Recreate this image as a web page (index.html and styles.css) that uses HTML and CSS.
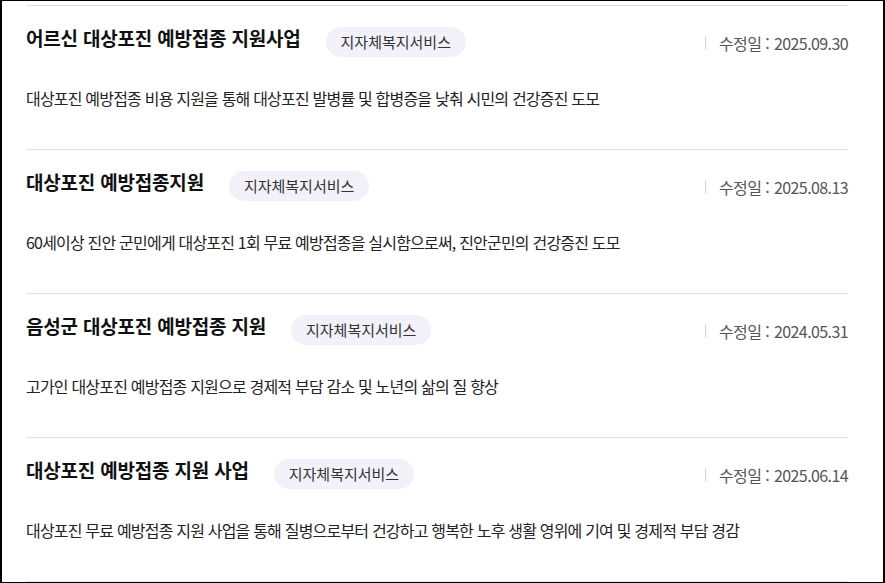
FILE: index.html
```html
<!DOCTYPE html>
<html lang="ko">
<head>
    <meta charset="UTF-8">
    <meta name="viewport" content="width=device-width, initial-scale=1.0">
    <title>대상포진 예방접종 지원</title>
    <link rel="stylesheet" href="styles.css">
</head>
<body>
    <div class="frame">
        <ul class="svc-list">
            <li class="svc-item">
                <div class="svc-head">
                    <h3 class="svc-title">어르신 대상포진 예방접종 지원사업</h3>
                    <span class="svc-tag">지자체복지서비스</span>
                    <span class="svc-date"><span class="svc-date-label">수정일 :</span>2025.09.30</span>
                </div>
                <p class="svc-desc">대상포진 예방접종 비용 지원을 통해 대상포진 발병률 및 합병증을 낮춰 시민의 건강증진 도모</p>
            </li>
            <li class="svc-item">
                <div class="svc-head">
                    <h3 class="svc-title">대상포진 예방접종지원</h3>
                    <span class="svc-tag">지자체복지서비스</span>
                    <span class="svc-date"><span class="svc-date-label">수정일 :</span>2025.08.13</span>
                </div>
                <p class="svc-desc">60세이상 진안 군민에게 대상포진 1회 무료 예방접종을 실시함으로써, 진안군민의 건강증진 도모</p>
            </li>
            <li class="svc-item">
                <div class="svc-head">
                    <h3 class="svc-title">음성군 대상포진 예방접종 지원</h3>
                    <span class="svc-tag">지자체복지서비스</span>
                    <span class="svc-date"><span class="svc-date-label">수정일 :</span>2024.05.31</span>
                </div>
                <p class="svc-desc">고가인 대상포진 예방접종 지원으로 경제적 부담 감소 및 노년의 삶의 질 향상</p>
            </li>
            <li class="svc-item">
                <div class="svc-head">
                    <h3 class="svc-title">대상포진 예방접종 지원 사업</h3>
                    <span class="svc-tag">지자체복지서비스</span>
                    <span class="svc-date"><span class="svc-date-label">수정일 :</span>2025.06.14</span>
                </div>
                <p class="svc-desc">대상포진 무료 예방접종 지원 사업을 통해 질병으로부터 건강하고 행복한 노후 생활 영위에 기여 및 경제적 부담 경감</p>
            </li>
        </ul>
    </div>
</body>
</html>
```

FILE: styles.css
```css
/* General Styles */
body {
    margin: 0;
    font-family: "Noto Sans CJK KR", "Noto Sans", sans-serif;
    color: #222;
    background-color: #fff;
}

/* Outer frame */
.frame {
    height: 583px;
    box-sizing: border-box;
    border-style: solid;
    border-color: #000;
    border-width: 1px 2px 1px 2px;
    padding: 4px 35px 0 24px;
    overflow: hidden;
}

/* List */
.svc-list {
    list-style: none;
    margin: 0;
    padding: 0;
    border-top: 1px solid #e1e1e1;
}

.svc-item {
    padding: 19px 0 40px 0;
    border-bottom: 1px solid #e1e1e1;
}

/* Item head */
.svc-head {
    display: flex;
    align-items: flex-start;
}

.svc-title {
    margin: 0;
    font-size: 19px;
    font-weight: bold;
    line-height: 26px;
    letter-spacing: -0.2px;
    color: #111;
}

.svc-tag {
    margin: 2px 0 0 25px;
    padding: 0 15px;
    height: 30px;
    line-height: 30px;
    border-radius: 15px;
    background-color: #f2f1f9;
    font-size: 15px;
    color: #333;
}

.svc-date {
    margin: 8px 0 0 auto;
    display: flex;
    align-items: center;
    font-size: 16px;
    line-height: 20px;
    letter-spacing: -0.6px;
    color: #555;
}

.svc-date::before {
    content: "";
    width: 1px;
    height: 14px;
    margin-right: 13px;
    background-color: #d4d4d4;
}

.svc-date-label {
    margin-right: 5px;
}

/* Description */
.svc-desc {
    margin: 30px 0 0;
    font-size: 16px;
    line-height: 22px;
    letter-spacing: -0.8px;
    color: #222;
}
```
